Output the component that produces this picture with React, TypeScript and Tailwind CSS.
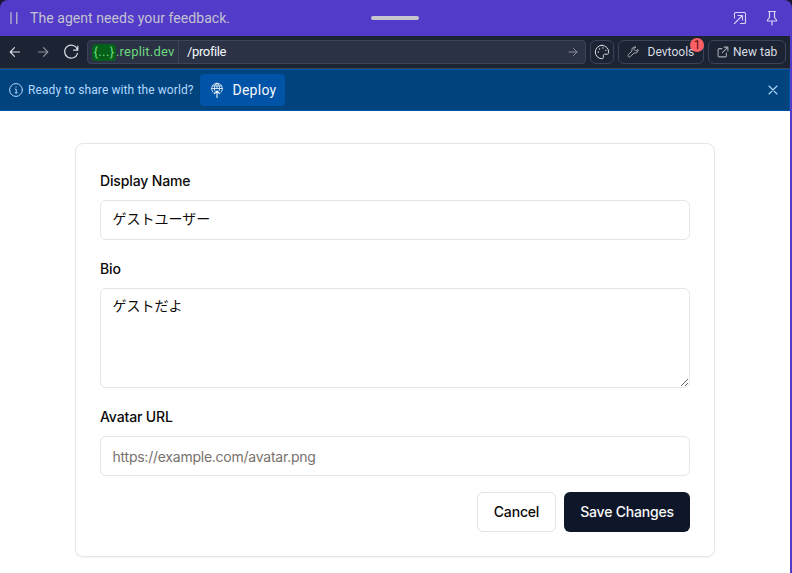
import React from "react";

type IconProps = { size: number; className?: string; children: React.ReactNode; box?: number; sw?: number };

function Icon({ size, className = "", children, box = 16, sw = 1 }: IconProps) {
  return (
    <svg
      width={size}
      height={size}
      viewBox={`0 0 ${box} ${box}`}
      fill="none"
      stroke="currentColor"
      strokeWidth={sw}
      strokeLinecap="round"
      strokeLinejoin="round"
      className={`shrink-0 ${className}`}
    >
      {children}
    </svg>
  );
}

function TitleBar() {
  return (
    <div className="bg-[#1a1633]">
      <header className="relative flex h-9 items-center rounded-t-lg bg-[#523bc8] pl-[10px] pr-3 text-[#c2c3d0]">
        <Icon size={12} box={12} sw={1.2} className="-mr-[3px]">
          <path d="M1 .600v10.800M6.800 .600v10.800" />
        </Icon>
        <span className="ml-[11px] font-['Roboto','Noto_Sans',sans-serif] text-[14px] leading-5 tracking-[0.06px] whitespace-nowrap">
          The agent needs your feedback.
        </span>
        <span className="absolute left-[371px] top-4 h-1 w-12 rounded-full bg-[#c5c6cd]" />
        <div className="ml-auto flex items-center gap-[17px] text-[#d9d6f3]">
          <Icon size={14} box={14} sw={1.1}>
            <path d="M1.500 7V2.500a1 1 0 0 1 1-1h9a1 1 0 0 1 1 1v9a1 1 0 0 1-1 1H7.500" />
            <path d="M1.500 12.500 9.300 4.700M5 4.500h4.500V9" />
          </Icon>
          <Icon size={16} sw={1.2}>
            <path d="M4.500 1.500h7M5.500 1.500v6L3.500 10v1h9v-1l-2-2.500v-6M8 11v4" />
          </Icon>
        </div>
      </header>
    </div>
  );
}

function BrowserBar() {
  return (
    <nav className="flex h-[33px] items-center border-b border-[#3c4350] bg-[#1c2333] pl-2 pr-1 font-['Roboto','Noto_Sans',sans-serif] text-[12px] leading-4 text-[#d8dbe3]">
      <Icon size={14} box={14} sw={1.2}>
        <path d="M11.500 7H2.200M6.500 2.700 2.200 7l4.300 4.300" />
      </Icon>
      <Icon size={14} box={14} sw={1.2} className="ml-[14px] text-[#8b909c]">
        <path d="M2.500 7h9.300M7.500 2.700 11.800 7l-4.300 4.300" />
      </Icon>
      <Icon size={16} className="ml-[13px]" sw={1.2}>
        <path d="M14.800 2v4.200h-4.200M14.500 6A6.500 6.500 0 1 0 14.500 9.300" />
      </Icon>
      <div className="ml-2 flex h-6 w-[499px] shrink-0 items-center rounded-[4px] border border-[#3c445c] bg-[#2b3245] pl-1">
        <span className="flex h-[17px] w-6 items-center justify-center rounded-[4px] bg-[#056019] text-[13px] tracking-[0.4px] text-[#6cd97e]">
          {"{...}"}
        </span>
        <span className="w-[62px] text-[13px] tracking-[0.19px] whitespace-nowrap text-[#6cd97e]">.replit.dev</span>
        <span className="h-full w-px bg-[#3c445c]" />
        <span className="ml-2 text-[13px] tracking-[-0.37px] text-[#f5f9fc]">/profile</span>
        <Icon size={10} box={10} className="ml-auto mr-[7px] text-[#8b909c]">
          <path d="M1 5h8M5.500 1.500 9 5 5.500 8.500" />
        </Icon>
      </div>
      <button className="ml-1 flex size-6 shrink-0 items-center justify-center rounded-md border border-[#3c445c]">
        <Icon size={16} sw={1}>
          <path d="M8 1.300a6.700 6.700 0 1 0 0 13.400c1.200 0 1.700-.8 1.400-1.800-.5-1.700.3-2.700 1.800-2.700h1.800c1 0 1.700-.8 1.700-1.900A6.800 6.800 0 0 0 8 1.300Z" />
          <path d="M4.300 8h.1M5.500 5h.1M8.900 4h.1M11.800 6.300h.1" strokeWidth="1.300" />
        </Icon>
      </button>
      <button className="relative ml-1 flex h-6 w-[86px] shrink-0 items-center rounded-md border border-[#3c445c] pl-2">
        <Icon size={12} className="text-[#a5aab6]" sw={1.3}>
          <path d="M11.500 1.300a4 4 0 0 0-4.800 5.200L1.800 11.700a1.700 1.700 0 0 0 2.500 2.500L9.500 9.300a4 4 0 0 0 5.200-4.800L12 7 9 4Z" />
        </Icon>
        <span className="ml-[8.500px] tracking-[0.03px]">Devtools</span>
        <span className="absolute -right-px -top-[3px] flex size-[14px] items-center justify-center rounded-full bg-[#ff6065] text-[12px] leading-none text-[#5a1015]">
          1
        </span>
      </button>
      <button className="ml-1 flex h-6 w-[78px] shrink-0 items-center rounded-md border border-[#3c445c] pl-2">
        <Icon size={12} className="text-[#a5aab6]" sw={1.4}>
          <path d="M6.500 3.500H3A1.500 1.500 0 0 0 1.500 5v8A1.500 1.500 0 0 0 3 14.500h8a1.500 1.500 0 0 0 1.500-1.500V9.500M9.500 1.500h5v5M14.200 1.800 7 9" />
        </Icon>
        <span className="ml-[4px] tracking-[0.03px] whitespace-nowrap">New tab</span>
      </button>
    </nav>
  );
}

function DeployBanner() {
  return (
    <section className="flex h-[42px] items-center border-y border-r border-[#0053a6] bg-[#00437d] pl-[9px] pr-[11px] font-['Roboto','Noto_Sans',sans-serif] text-[#b3d9ff]">
      <Icon size={14} box={14}>
        <circle cx="7" cy="7" r="6.400" />
        <path d="M6.300 6.200h.9v3.600M6.200 9.900h2M7 4.100h.1" />
      </Icon>
      <span className="ml-[5px] w-[166px] text-[12px] leading-4 tracking-[0.1px] whitespace-nowrap">
        Ready to share with the world?
      </span>
      <button className="ml-[6px] flex h-8 w-[85px] items-center rounded-[4px] bg-[#0053a6] pl-[9px] text-[14px] leading-5 text-[#f5f9fc]">
        <Icon size={16} sw={0.8}>
          <path d="M4 10.300A5.400 5.400 0 1 1 12 10.300M2.500 6.500h11M3.500 4h9M5.800 8.800C4.700 6 5.700 2.300 8 1.200c2.300 1.100 3.300 4.800 2.200 7.600M8 1.200v5.300" />
          <path d="M8 15.500V9M5.300 11.700 8 9l2.700 2.700" strokeWidth="1.100" />
        </Icon>
        <span className="ml-[7.500px] tracking-[0.25px]">Deploy</span>
      </button>
      <Icon size={10} box={10} className="ml-auto" sw={1.1}>
        <path d="m1 1 8 8M9 1 1 9" />
      </Icon>
    </section>
  );
}

function Label({ htmlFor, children }: { htmlFor: string; children: React.ReactNode }) {
  return (
    <label htmlFor={htmlFor} className="block pt-[3px] pb-px text-[14px] leading-5 font-medium tracking-[-0.14px]">
      {children}
    </label>
  );
}

function ProfileForm() {
  return (
    <main className="flex flex-1 justify-center bg-white pt-8 font-['Inter','Noto_Sans_CJK_JP',sans-serif] text-[14px] leading-5 text-[#0c0a09]">
      <form className="flex h-[414px] w-[640px] flex-col gap-4 rounded-lg border border-[#e5e5e5] p-6 shadow-xs">
        <div className="flex flex-col gap-2">
          <Label htmlFor="name">Display Name</Label>
          <input
            id="name"
            defaultValue="ゲストユーザー"
            className="h-10 w-full rounded-md border border-[#e5e5e5] px-[11.5px] pt-[5px] pb-[10px]"
          />
        </div>
        <div className="flex flex-col gap-2">
          <Label htmlFor="bio">Bio</Label>
          <textarea
            id="bio"
            defaultValue="ゲストだよ"
            className="block h-[100px] w-full resize-y rounded-md border border-[#e5e5e5] px-[11.5px] py-[7px]"
          />
        </div>
        <div className="flex flex-col gap-2">
          <Label htmlFor="avatar">Avatar URL</Label>
          <input
            id="avatar"
            placeholder="https://example.com/avatar.png"
            className="h-10 w-full rounded-md border border-[#e5e5e5] px-[11.5px] py-2 tracking-[-0.24px] placeholder:text-[#78716c]"
          />
        </div>
        <div className="flex justify-end gap-2 font-medium">
          <button type="button" className="h-10 w-[79px] rounded-md border border-[#e5e5e5] tracking-[-0.17px]">
            Cancel
          </button>
          <button type="button" className="h-10 w-[126px] rounded-md bg-[#0e1629] tracking-[-0.2px] text-[#fafaf9]">
            Save Changes
          </button>
        </div>
      </form>
    </main>
  );
}

export default function App() {
  return (
    <div className="flex h-[573px] w-[792px] flex-col overflow-hidden">
      <TitleBar />
      <div className="flex flex-1 flex-col border-r-2 border-[#523bc8]">
        <BrowserBar />
        <DeployBanner />
        <ProfileForm />
      </div>
    </div>
  );
}
